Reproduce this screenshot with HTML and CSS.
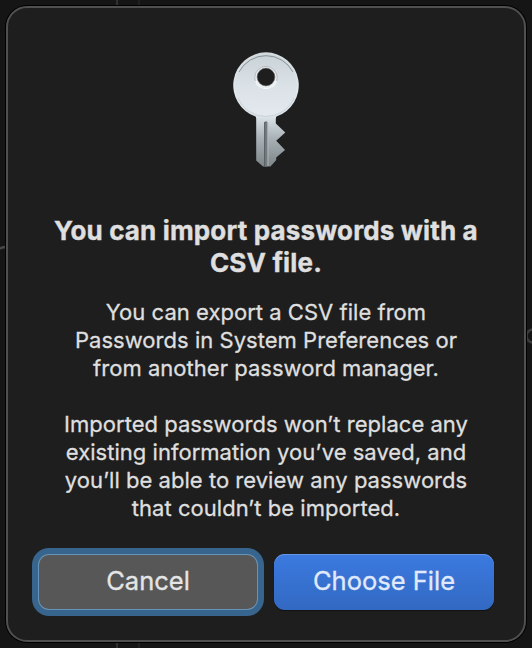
FILE: index.html
```html
<!DOCTYPE html>
<html lang="en">
<head>
  <meta charset="UTF-8" />
  <meta name="viewport" content="width=device-width, initial-scale=1.0" />
  <title>Import Passwords</title>
  <link rel="stylesheet" href="styles.css">
</head>
<body>
  <!-- Window behind the dialog -->
  <svg class="backdrop" width="532" height="648" viewBox="0 0 532 648" fill="none">
    <path d="M117 0V648" stroke="#303030" stroke-width="2" />
    <path d="M139 0V648" stroke="#202020" stroke-width="2" />
    <path d="M0 249Q2 246.500 6 247.500" stroke="#484848" stroke-width="2.500" />
    <circle cx="533" cy="336" r="6.500" stroke="#3c3c3c" stroke-width="2.500" />
  </svg>

  <div class="dialog">
    <svg class="key-icon" width="72" height="120" viewBox="0 0 72 120">
      <defs>
        <linearGradient id="rim" x1="0" y1="0" x2="0" y2="1">
          <stop offset="0" stop-color="#d3dade" />
          <stop offset="0.350" stop-color="#e2e9ed" />
          <stop offset="0.570" stop-color="#d9e2e7" />
          <stop offset="0.750" stop-color="#a9b2b6" />
          <stop offset="1" stop-color="#7d8589" />
        </linearGradient>
        <linearGradient id="face" x1="0" y1="0" x2="0" y2="1">
          <stop offset="0" stop-color="#c9d2d7" />
          <stop offset="0.500" stop-color="#dbe2e7" />
          <stop offset="1" stop-color="#e3e9ee" />
        </linearGradient>
      </defs>
      <path fill="url(#rim)" fill-rule="evenodd" d="M36 2.300A33 33 0 0 1 46.500 66.500Q45.800 67 45.800 69V73.500L55.300 82.500L46.200 90.800L55 100L46.200 107.500V110L40.500 116.500H33L26.200 110.500V69Q26.200 67 25.500 66.500A33 33 0 0 1 36 2.300Z" />
      <circle cx="36" cy="35.500" r="31" fill="url(#face)" />
      <path d="M9 22A30.500 30.500 0 0 1 63 22" fill="none" stroke="#858a8d" stroke-width="0.900" />
      <path d="M8 48A30.500 30.500 0 0 0 64 48" fill="none" stroke="#c5ced3" stroke-width="0.800" />
      <circle cx="36" cy="27.600" r="11.200" fill="#e9eff2" stroke="#a3a9ad" stroke-width="0.700" />
      <path d="M25.500 31A11 11 0 0 0 46.500 31" fill="none" stroke="#f7fafb" stroke-width="1.200" />
      <circle cx="36" cy="27" r="8.900" fill="#1e1e1e" stroke="#746f70" stroke-width="0.600" />
      <path d="M34.500 72Q36 70.500 37.500 72V116.500H34.500Z" fill="#747b7f" />
      <path d="M34.600 72V116" stroke="#545a5d" stroke-width="0.900" />
      <path d="M38 73V116" stroke="#b7bfc3" stroke-width="0.800" />
    </svg>

    <h1 class="title">You can import passwords with a<br>CSV file.</h1>
    <p class="message export">You can export a CSV file from<br>Passwords in System Preferences or<br>from another password manager.</p>
    <p class="message imported">Imported passwords won’t replace any<br>existing information you’ve saved, and<br>you’ll be able to review any passwords<br>that couldn’t be imported.</p>

    <div class="buttons">
      <button class="btn cancel">Cancel</button>
      <button class="btn choose">Choose File</button>
    </div>
  </div>
</body>
</html>
```

FILE: styles.css
```css
body {
  margin: 0;
  padding: 6px;
  height: 648px;
  box-sizing: border-box;
  overflow: hidden;
  background: #151515;
  font-family: Inter, "Liberation Sans", sans-serif;
}
.backdrop {
  position: absolute;
  top: 0;
  left: 0;
}
.dialog {
  position: relative;
  box-sizing: border-box;
  width: 520px;
  height: 636px;
  padding: 42px 30px 0;
  display: flex;
  flex-direction: column;
  align-items: center;
  background: #1e1e1e;
  border: 2px solid #505050;
  border-radius: 21px;
  box-shadow: 0 0 0 1px #000;
  color: #dfdfdf;
  text-align: center;
  white-space: nowrap;
}
.key-icon {
  display: block;
}
/* Text */
.title {
  margin: 45px 0 0;
  font-size: 26px;
  line-height: 32px;
  font-weight: 700;
  letter-spacing: 0.15px;
  -webkit-text-stroke: 0.4px #dfdfdf;
}
.message {
  margin: 0;
  font-size: 22px;
  line-height: 28px;
  letter-spacing: 0.03px;
  -webkit-text-stroke: 0.3px #dfdfdf;
}
.export {
  margin-top: 19px;
}
.imported {
  margin-top: 28px;
}
/* Buttons */
.buttons {
  display: flex;
  gap: 16px;
  margin-top: 32px;
}
.btn {
  width: 220px;
  height: 56px;
  padding: 0 0 4px;
  border: 0;
  border-radius: 11px;
  font-family: inherit;
  font-size: 25.5px;
  color: #e5e5e5;
  -webkit-text-stroke: 0.3px currentColor;
}
.cancel {
  background: #575757;
  box-shadow: inset 0 0 0 1px #6794b9, 0 0 0 6px #37658e;
}
.choose {
  background: linear-gradient(#3c7ae0, #3269c2);
  box-shadow: inset 0 1px 0 #6596e8, 0 1px 1px #111;
  color: #e0eafc;
}
```
